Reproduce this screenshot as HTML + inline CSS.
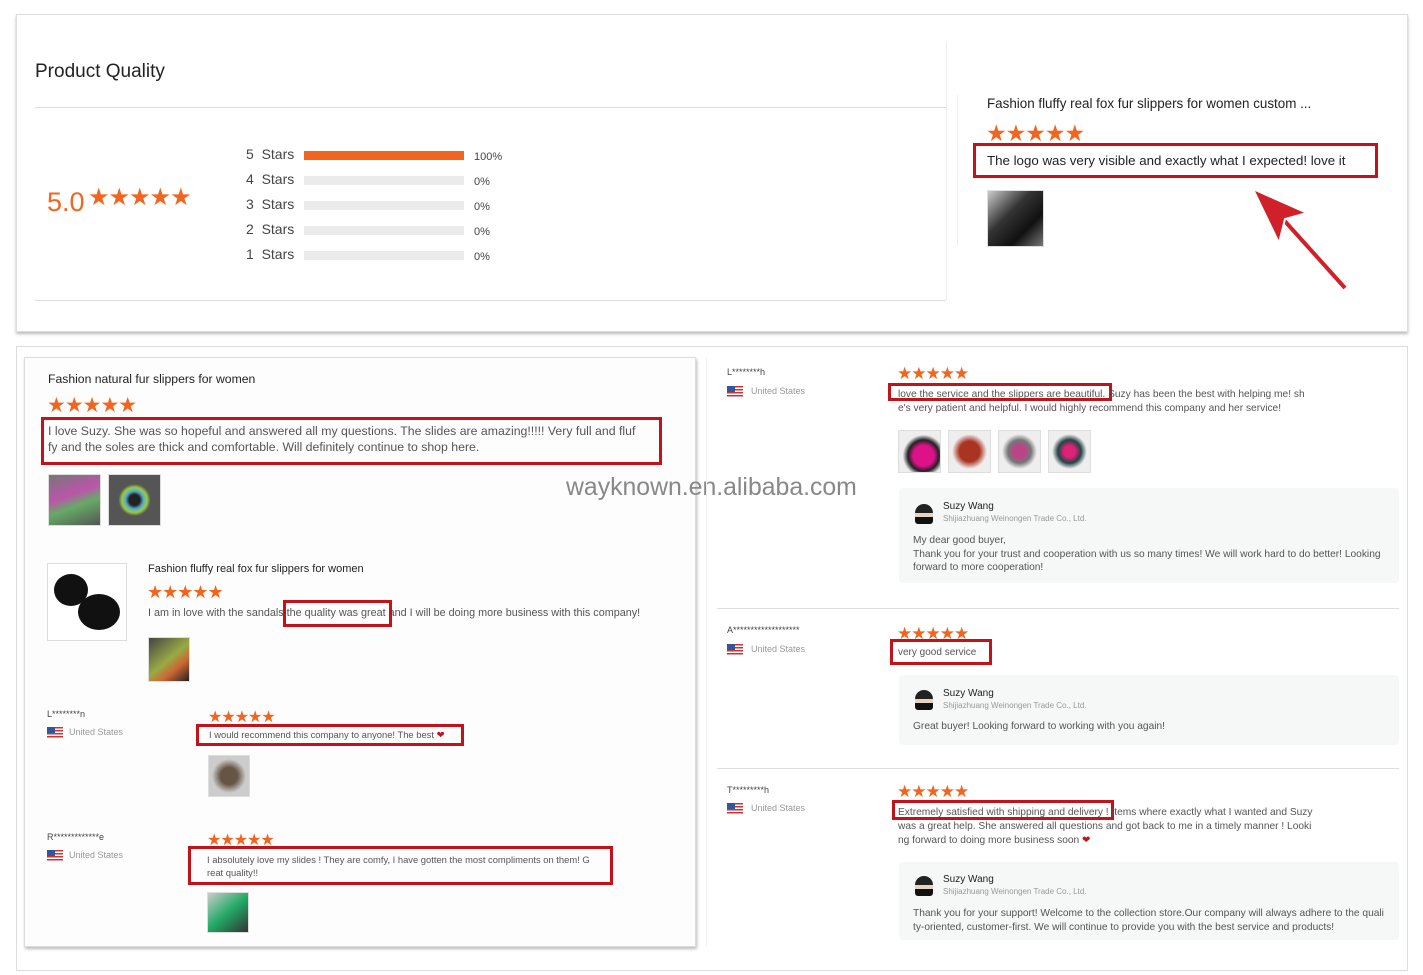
<!DOCTYPE html>
<html><head><meta charset="utf-8"><style>
*{margin:0;padding:0;box-sizing:border-box}
body{width:1423px;height:975px;background:#fff;font-family:"Liberation Sans",sans-serif;position:relative;overflow:hidden;color:#333}
.a{position:absolute;white-space:nowrap}
.st{color:#f2651f;letter-spacing:-1px}
.rb{position:absolute;border:3px solid #c4121b}
.th{position:absolute;border:1px solid #ddd;background:#f4f4f4}
.sm{font-size:10.2px;color:#555}
.gy{font-size:9px;color:#999}
.bar{position:absolute;height:9px;background:#ebebeb;width:160px;left:304px}
.fl{position:absolute;width:16px;height:11px;background:repeating-linear-gradient(#c33 0 1.5px,#fff 1.5px 3px)}
.fl:after{content:"";position:absolute;left:0;top:0;width:8px;height:6px;background:#33569a}
.rep{position:absolute;background:#f6f7f7;border-radius:4px}
.av{position:absolute;width:18px;height:20px;border-radius:9px 9px 3px 3px;background:linear-gradient(#222 0 45%,#e8d2c0 45% 65%,#111 65%)}
</style></head><body>
<!-- top panel -->
<div class="a" style="left:16px;top:14px;width:1392px;height:318px;border:1px solid #ddd;box-shadow:0 2px 3px #bbb"></div>
<div class="a" style="left:35px;top:61px;font-size:19px;color:#222">Product Quality</div>
<div class="a" style="left:35px;top:107px;width:911px;height:1px;background:#ddd"></div>
<div class="a" style="left:35px;top:300px;width:911px;height:1px;background:#ddd"></div>
<div class="a" style="left:946px;top:42px;width:1px;height:258px;background:#eee"></div>
<div class="a" style="left:47px;top:187px;font-size:27px;color:#f2651f">5.0</div>
<div class="a st" style="left:88px;top:183px;font-size:24px">★★★★★</div>
<div class="a" style="left:246px;top:142px;font-size:14px;color:#444;line-height:25px">5&nbsp; Stars<br>4&nbsp; Stars<br>3&nbsp; Stars<br>2&nbsp; Stars<br>1&nbsp; Stars</div>
<div class="bar" style="top:151px;background:#f2651f"></div>
<div class="bar" style="top:176px"></div><div class="bar" style="top:201px"></div><div class="bar" style="top:226px"></div><div class="bar" style="top:251px"></div>
<div class="a" style="left:474px;top:145px;font-size:11px;color:#444;line-height:25px">100%<br>0%<br>0%<br>0%<br>0%</div>
<div class="a" style="left:957px;top:95px;width:1px;height:150px;background:#eee"></div>
<div class="a" style="left:987px;top:96px;font-size:13.4px;color:#222">Fashion fluffy real fox fur slippers for women custom ...</div>
<div class="a st" style="left:986px;top:120px;font-size:23px">★★★★★</div>
<div class="rb" style="left:973px;top:143px;width:405px;height:35px"></div>
<div class="a" style="left:987px;top:153px;font-size:13.3px;color:#222">The logo was very visible and exactly what I expected! love it</div>
<div class="th" style="left:987px;top:190px;width:57px;height:57px;background:linear-gradient(135deg,#ccc,#333 40%,#111 70%,#777)"></div>
<svg class="a" style="left:1245px;top:183px" width="110" height="112"><path d="M100 105 L28 25" stroke="#d0202a" stroke-width="4"/><path d="M8 6 L62 30 L40 36 L34 60 Z" fill="#d0202a" stroke="#fff" stroke-width="2"/></svg>
<!-- bottom container -->
<div class="a" style="left:16px;top:346px;width:1392px;height:625px;border:1px solid #ddd"></div>
<div class="a" style="left:24px;top:357px;width:672px;height:590px;border:1px solid #ddd;box-shadow:1px 2px 3px #bbb;background:#fdfdfd"></div>
<div class="a" style="left:48px;top:372px;font-size:12.2px;color:#222">Fashion natural fur slippers for women</div>
<div class="a st" style="left:47px;top:393px;font-size:21px">★★★★★</div>
<div class="rb" style="left:41px;top:417px;width:621px;height:48px"></div>
<div class="a" style="left:48px;top:423px;font-size:12.3px;color:#555;line-height:16px">I love Suzy. She was so hopeful and answered all my questions. The slides are amazing!!!!! Very full and fluf<br>fy and the soles are thick and comfortable. Will definitely continue to shop here.</div>
<div class="th" style="left:48px;top:474px;width:53px;height:52px;background:linear-gradient(160deg,#777,#b5a 40%,#6a6 60%,#555)"></div>
<div class="th" style="left:108px;top:474px;width:53px;height:52px;background:radial-gradient(circle,#222 15%,#5ac 25%,#9c4 35%,#555 45%)"></div>
<div class="a" style="left:566px;top:474px;font-size:24.8px;color:#888">wayknown.en.alibaba.com</div>
<div class="th" style="left:47px;top:563px;width:80px;height:78px;background:#fff"><div class="a" style="left:6px;top:10px;width:34px;height:32px;border-radius:50%;background:#111"></div><div class="a" style="left:30px;top:30px;width:42px;height:36px;border-radius:50%;background:#111"></div></div>
<div class="a" style="left:148px;top:563px;font-size:11px;color:#222">Fashion fluffy real fox fur slippers for women</div>
<div class="a st" style="left:147px;top:582px;font-size:18px">★★★★★</div>
<div class="a sm" style="left:148px;top:607px;font-size:10.8px">I am in love with the sandals the quality was great and I will be doing more business with this company!</div>
<div class="rb" style="left:283px;top:600px;width:109px;height:27px"></div>
<div class="th" style="left:148px;top:637px;width:42px;height:45px;background:linear-gradient(140deg,#444,#9a4 50%,#c63 70%,#222)"></div>
<div class="a gy" style="left:47px;top:709px;color:#444">L********n</div>
<div class="fl" style="left:47px;top:727px"></div><div class="a gy" style="left:69px;top:727px">United States</div>
<div class="a st" style="left:208px;top:707px;font-size:16px">★★★★★</div>
<div class="rb" style="left:196px;top:724px;width:268px;height:22px"></div>
<div class="a" style="left:209px;top:729px;font-size:9.4px;color:#555">I would recommend this company to anyone! The best <span style="color:#c4121b">❤</span></div>
<div class="th" style="left:208px;top:755px;width:42px;height:42px;background:radial-gradient(circle,#654 30%,#ccc 60%)"></div>
<div class="a gy" style="left:47px;top:832px;color:#444">R*************e</div>
<div class="fl" style="left:47px;top:850px"></div><div class="a gy" style="left:69px;top:850px">United States</div>
<div class="a st" style="left:207px;top:830px;font-size:16px">★★★★★</div>
<div class="rb" style="left:188px;top:846px;width:425px;height:39px"></div>
<div class="a" style="left:207px;top:853px;font-size:9.4px;color:#555;line-height:13px">I absolutely love my slides ! They are comfy, I have gotten the most compliments on them! G<br>reat quality!!</div>
<div class="th" style="left:207px;top:892px;width:42px;height:41px;background:linear-gradient(140deg,#ccc,#2a6 50%,#333)"></div>
<!-- right column -->
<div class="a" style="left:706px;top:357px;width:1px;height:590px;background:#f2f2f2"></div>
<div class="a gy" style="left:727px;top:367px;color:#444">L********h</div>
<div class="fl" style="left:727px;top:386px"></div><div class="a gy" style="left:751px;top:386px">United States</div>
<div class="a st" style="left:897px;top:364px;font-size:17px">★★★★★</div>
<div class="rb" style="left:888px;top:383px;width:224px;height:18px"></div>
<div class="a" style="left:898px;top:388px;font-size:10.2px;color:#555;line-height:14px">love the service and the slippers are beautiful. Suzy has been the best with helping me! sh<br>e's very patient and helpful. I would highly recommend this company and her service!</div>
<div class="th" style="left:898px;top:430px;width:43px;height:43px;background:radial-gradient(circle at 60% 60%,#d18 30%,#222 45%,#eee 60%)"></div>
<div class="th" style="left:948px;top:430px;width:43px;height:43px;background:radial-gradient(circle,#a32 35%,#eee 60%)"></div>
<div class="th" style="left:998px;top:430px;width:43px;height:43px;background:radial-gradient(circle,#b48 20%,#777 40%,#eee 60%)"></div>
<div class="th" style="left:1048px;top:430px;width:43px;height:43px;background:radial-gradient(circle,#d27 20%,#244 40%,#eee 60%)"></div>
<div class="rep" style="left:899px;top:488px;width:500px;height:95px"></div>
<div class="av" style="left:915px;top:504px"></div>
<div class="a" style="left:943px;top:501px;font-size:10px;color:#222">Suzy Wang</div>
<div class="a gy" style="left:943px;top:514px;font-size:8px">Shijiazhuang Weinongen Trade Co., Ltd.</div>
<div class="a sm" style="left:913px;top:534px;line-height:13.5px">My dear good buyer,<br>Thank you for your trust and cooperation with us so many times! We will work hard to do better! Looking<br>forward to more cooperation!</div>
<div class="a" style="left:717px;top:608px;width:682px;height:1px;background:#ddd"></div>
<div class="a gy" style="left:727px;top:625px;color:#444">A*******************</div>
<div class="fl" style="left:727px;top:644px"></div><div class="a gy" style="left:751px;top:644px">United States</div>
<div class="a st" style="left:897px;top:624px;font-size:17px">★★★★★</div>
<div class="rb" style="left:890px;top:639px;width:102px;height:26px"></div>
<div class="a" style="left:898px;top:647px;font-size:10px;color:#555">very good service</div>
<div class="rep" style="left:899px;top:675px;width:500px;height:70px"></div>
<div class="av" style="left:915px;top:690px"></div>
<div class="a" style="left:943px;top:688px;font-size:10px;color:#222">Suzy Wang</div>
<div class="a gy" style="left:943px;top:701px;font-size:8px">Shijiazhuang Weinongen Trade Co., Ltd.</div>
<div class="a sm" style="left:913px;top:721px">Great buyer! Looking forward to working with you again!</div>
<div class="a" style="left:717px;top:768px;width:682px;height:1px;background:#ddd"></div>
<div class="a gy" style="left:727px;top:785px;color:#444">T*********h</div>
<div class="fl" style="left:727px;top:803px"></div><div class="a gy" style="left:751px;top:803px">United States</div>
<div class="a st" style="left:897px;top:782px;font-size:17px">★★★★★</div>
<div class="rb" style="left:892px;top:800px;width:222px;height:20px"></div>
<div class="a" style="left:898px;top:806px;font-size:10.2px;color:#555;line-height:14px">Extremely satisfied with shipping and delivery ! Items where exactly what I wanted and Suzy<br>was a great help. She answered all questions and got back to me in a timely manner ! Looki<br>ng forward to doing more business soon <span style="color:#c4121b">❤</span></div>
<div class="rep" style="left:899px;top:862px;width:500px;height:78px"></div>
<div class="av" style="left:915px;top:876px"></div>
<div class="a" style="left:943px;top:874px;font-size:10px;color:#222">Suzy Wang</div>
<div class="a gy" style="left:943px;top:887px;font-size:8px">Shijiazhuang Weinongen Trade Co., Ltd.</div>
<div class="a sm" style="left:913px;top:907px;line-height:14px">Thank you for your support! Welcome to the collection store.Our company will always adhere to the quali<br>ty-oriented, customer-first. We will continue to provide you with the best service and products!</div>
</body></html>
